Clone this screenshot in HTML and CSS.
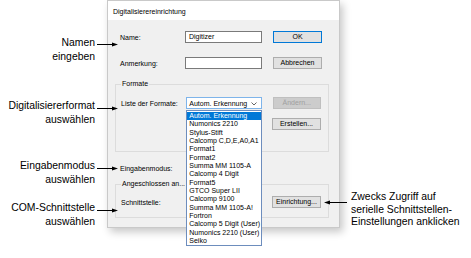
FILE: index.html
```html
<!DOCTYPE html>
<html lang="de">
<head>
  <meta charset="UTF-8" />
  <title>Digitalisierereinrichtung</title>
  <link rel="stylesheet" href="styles.css">
</head>
<body>
  <div class="stage">

    <!-- Dialog -->
    <div class="dialog">
      <div class="titlebar">Digitalisierereinrichtung</div>
      <div class="content">
        <div class="row">
          <span class="label">Name:</span>
          <span class="input">Digitizer</span>
          <span class="btn btn-default">OK</span>
        </div>
        <div class="row row-gap">
          <span class="label">Anmerkung:</span>
          <span class="input"></span>
          <span class="btn">Abbrechen</span>
        </div>

        <div class="group group-formate">
          <span class="group-label">Formate</span>
          <div class="row">
            <span class="label label-wide">Liste der Formate:</span>
            <div class="select">
              <span>Autom. Erkennung</span>
              <svg class="chevron" width="6" height="4" viewBox="0 0 6 4"><path d="M0.5 0.5 L3 3 L5.5 0.5" fill="none" stroke="#555" stroke-width="0.9"/></svg>
              <ul class="droplist">
                <li class="active">Autom. Erkennung</li>
                <li>Numonics 2210</li>
                <li>Stylus-Stift</li>
                <li>Calcomp C,D,E,A0,A1</li>
                <li>Format1</li>
                <li>Format2</li>
                <li>Summa MM 1105-A</li>
                <li>Calcomp 4 Digit</li>
                <li>Format5</li>
                <li>GTCO Super LII</li>
                <li>Calcomp 9100</li>
                <li>Summa MM 1105-A!</li>
                <li>Fortron</li>
                <li>Calcomp 5 Digit (User)</li>
                <li>Numonics 2210 (User)</li>
                <li>Seiko</li>
              </ul>
            </div>
            <span class="btn btn-disabled">Ändern...</span>
          </div>
          <div class="row row-right">
            <span class="btn">Erstellen...</span>
          </div>
        </div>

        <div class="row row-mode">
          <span class="label">Eingabenmodus:</span>
        </div>

        <div class="group group-port">
          <span class="group-label group-label-port">Angeschlossen an...</span>
          <div class="row">
            <span class="label">Schnittstelle:</span>
            <span class="spacer"></span>
            <span class="btn">Einrichtung...</span>
          </div>
        </div>
      </div>
    </div>

    <!-- Callouts -->
    <div class="note note-left note-name">Namen<br>eingeben</div>
    <div class="note note-left note-format">Digitalisiererformat<br>auswählen</div>
    <div class="note note-left note-mode">Eingabenmodus<br>auswählen</div>
    <div class="note note-left note-com">COM-Schnittstelle<br>auswählen</div>
    <div class="note note-right">Zwecks Zugriff auf<br>serielle Schnittstellen-<br>Einstellungen anklicken</div>

    <svg class="arrows" width="471" height="258" viewBox="0 0 471 258">
      <g stroke="#000" stroke-width="1">
        <line x1="97" y1="44.5" x2="114" y2="44.5"/>
        <line x1="97" y1="108.5" x2="114" y2="108.5"/>
        <line x1="97" y1="168.5" x2="114" y2="168.5"/>
        <line x1="97" y1="210.5" x2="114" y2="210.5"/>
        <line x1="328" y1="202.5" x2="347" y2="202.5"/>
      </g>
      <g fill="#000">
        <path d="M112 42.5 L118 44.5 L112 46.5 Z"/>
        <path d="M112 106.5 L118 108.5 L112 110.5 Z"/>
        <path d="M112 166.5 L118 168.5 L112 170.5 Z"/>
        <path d="M112 208.5 L118 210.5 L112 212.5 Z"/>
        <path d="M330 200.5 L324 202.5 L330 204.5 Z"/>
      </g>
    </svg>
  </div>
</body>
</html>
```

FILE: styles.css
```css
* {
  margin: 0;
  padding: 0;
  box-sizing: border-box;
}

body, html {
  background: #fff;
  overflow: hidden;
}

.stage {
  position: relative;
  width: 471px;
  height: 258px;
}

/* Dialog */
.dialog {
  width: 233px;
  height: 228px;
  margin-left: 107px;
  background: #f0f0f0;
  border: 1px solid #c9c9c9;
  box-shadow: 3px 4px 8px rgba(0, 0, 0, 0.22);
  font-family: "Liberation Sans", Arial, sans-serif;
  font-size: 7px;
  color: #000;
}

.titlebar {
  height: 19px;
  background: #fff;
  padding-left: 5px;
  line-height: 22px;
}

.content {
  padding: 11px 10px 0 7px;
}

.row {
  display: flex;
  align-items: center;
  height: 12px;
  padding: 0 7px 0 5px;
}

.row-gap {
  margin-top: 14px;
}

.label {
  width: 65px;
  white-space: nowrap;
}

.label-wide {
  width: 66px;
}

.input {
  width: 77px;
  height: 12px;
  background: #fff;
  border: 1px solid #7a7a7a;
  padding-left: 3px;
  line-height: 10px;
}

.btn {
  width: 49px;
  height: 12px;
  margin-left: 11px;
  background: #e1e1e1;
  border: 1px solid #adadad;
  text-align: center;
  line-height: 10px;
}

.btn-default {
  border-color: #0078d7;
}

.btn-disabled {
  background: #cccccc;
  border-color: #bfbfbf;
  color: #a0a0a0;
}

.row-right {
  justify-content: flex-end;
  margin-top: 9px;
}

.spacer {
  flex: 1;
}

/* Group boxes */
.group {
  position: relative;
  border: 1px solid #dcdcdc;
}

.group-label {
  position: absolute;
  top: -5px;
  left: 5px;
  padding: 0 1px;
  background: #f0f0f0;
  line-height: 8px;
}

.group-formate {
  margin-top: 15px;
  padding: 12px 0 21px;
}

.group-port {
  margin-top: 10px;
  padding: 11px 0 9px;
}

.row-mode {
  margin-top: 10px;
}

/* Combobox */
.select {
  position: relative;
  display: flex;
  align-items: center;
  width: 76px;
  height: 12px;
  background: #fff;
  border: 1px solid #7eb4ea;
  padding-left: 2px;
}

.chevron {
  position: absolute;
  right: 4px;
  top: 4px;
}

.droplist {
  position: absolute;
  top: 12px;
  left: -1px;
  width: 76px;
  list-style: none;
  background: #fff;
  border: 1px solid #6d8dbd;
  padding: 1px 0 0;
  z-index: 3;
}

.droplist li {
  height: 8.33px;
  line-height: 8.33px;
  padding-left: 2px;
  white-space: nowrap;
}

.droplist li.active {
  background: #0078d7;
  color: #fff;
}

/* Callouts */
.note {
  position: absolute;
  font-family: "Liberation Sans", Arial, sans-serif;
  font-size: 10.4px;
  line-height: 13.5px;
  color: #000;
}

.note-left {
  right: 376px;
  text-align: right;
}

.note-name { top: 36px; }
.note-format { top: 99px; }
.note-mode { top: 159px; }
.note-com { top: 201px; }

.note-right {
  left: 351px;
  top: 191px;
  line-height: 12.5px;
}

.arrows {
  position: absolute;
  top: 0;
  left: 0;
  z-index: 4;
}
```
